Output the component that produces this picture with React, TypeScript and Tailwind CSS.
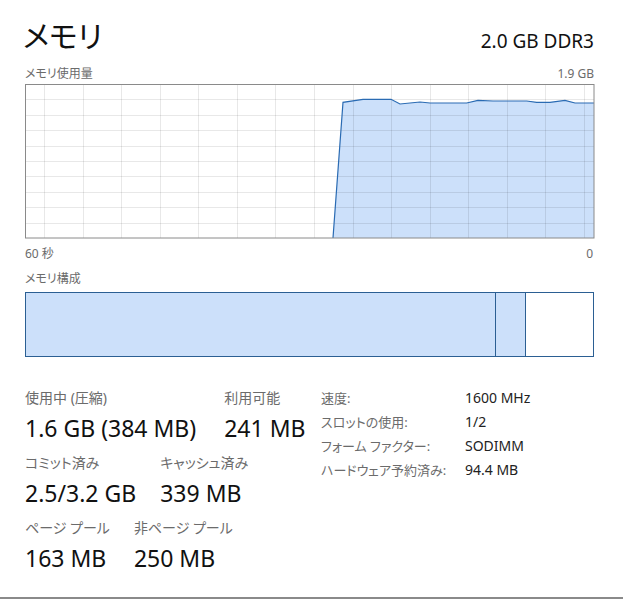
import React from 'react';

const font = {
    fontFamily: '"Segoe UI", "Noto Sans", "Noto Sans CJK JP", sans-serif',
    fontFeatureSettings: '"palt"',
};

// usage history, in chart coordinates (569 x 154)
const usagePoints: [number, number][] = [
    [308, 154], [318, 18.3], [338, 15.3], [366, 15.3], [375, 20], [395, 18], [405, 19],
    [441.7, 19], [453, 16.3], [468, 17], [501.7, 17], [511.7, 18.3], [525, 18.3],
    [540, 16.3], [550, 19], [569, 19], [569, 154],
];

const UsageChart: React.FC = () => {
    const w = 569;
    const h = 154;
    const vLines = Array.from({ length: 15 }, (_, i) => 19 + i * 38.57);
    const hLines = Array.from({ length: 9 }, (_, i) => (i + 1) * 15.4);
    const pts = usagePoints.map(p => p.join(',')).join(' ');
    const line = usagePoints.slice(0, -1).map(p => p.join(',')).join(' ');

    return (
        <svg width={w + 1} height={h + 1} className="block">
            <polygon points={pts} fill="#cce0fa" />
            {vLines.map(x => (
                <line key={x} x1={Math.round(x) + 0.5} y1={0} x2={Math.round(x) + 0.5} y2={h} stroke="#000" strokeOpacity={0.09} />
            ))}
            {hLines.map(y => (
                <line key={y} x1={0} y1={Math.round(y) + 0.5} x2={w} y2={Math.round(y) + 0.5} stroke="#000" strokeOpacity={0.09} />
            ))}
            <polyline points={line} fill="none" stroke="#2a6bb3" strokeWidth={1.2} />
            <rect x={0.5} y={0.5} width={w - 0.5} height={h - 0.5} fill="none" stroke="#8a8a8a" />
        </svg>
    );
};

const Stat: React.FC<{ label: string; value: string }> = ({ label, value }) => (
    <div className="flex flex-col">
        <span className="text-[14px] leading-[18px] text-[#6b6b6b]">{label}</span>
        <span className="text-[23px] leading-[30px] text-[#111] mt-[6px]">{value}</span>
    </div>
);

const details: [string, string][] = [
    ['速度:', '1600 MHz'],
    ['スロットの使用:', '1/2'],
    ['フォーム ファクター:', 'SODIMM'],
    ['ハードウェア予約済み:', '94.4 MB'],
];

export default function App() {
    return (
        <div style={font} className="w-[623px] h-[599px] bg-white relative overflow-hidden">
            <div className="pl-[25px] pr-[29px] pt-[16px]">
                {/* Header */}
                <div className="flex justify-between items-end">
                    <h1 className="text-[30px] leading-[40px] text-[#111] -ml-[2px]">メモリ</h1>
                    <span className="text-[19px] leading-[26px] text-[#111] mb-[2px]">2.0 GB DDR3</span>
                </div>

                {/* Usage chart */}
                <div className="flex justify-between text-[12px] leading-[16px] text-[#6b6b6b] mt-[10px]">
                    <span>メモリ使用量</span>
                    <span>1.9 GB</span>
                </div>
                <div className="mt-[2px]">
                    <UsageChart />
                </div>
                <div className="flex justify-between text-[12px] leading-[16px] text-[#6b6b6b] mt-[7px]">
                    <span>60 秒</span>
                    <span className="pr-[1px]">0</span>
                </div>

                {/* Composition */}
                <div className="text-[12px] leading-[16px] text-[#6b6b6b] mt-[9px]">メモリ構成</div>
                <div className="mt-[5px] w-[569px] h-[65px] border border-[#2b5f93] flex">
                    <div className="w-[469px] bg-[#cce0fa]" />
                    <div className="w-[30px] bg-[#cce0fa] border-l border-[#2b5f93]" />
                    <div className="flex-1 bg-white border-l border-[#2b5f93]" />
                </div>

                {/* Stats */}
                <div className="flex items-start mt-[32px]">
                    <div className="w-[296px] flex flex-col gap-[11px]">
                        <div className="flex gap-[28px]">
                            <Stat label="使用中 (圧縮)" value="1.6 GB (384 MB)" />
                            <Stat label="利用可能" value="241 MB" />
                        </div>
                        <div className="flex gap-[24px]">
                            <Stat label="コミット済み" value="2.5/3.2 GB" />
                            <Stat label="キャッシュ済み" value="339 MB" />
                        </div>
                        <div className="flex gap-[24px]">
                            <Stat label="ページ プール" value="163 MB" />
                            <Stat label="非ページ プール" value="250 MB" />
                        </div>
                    </div>
                    <div className="grid grid-cols-[144px_auto] gap-y-[6px] leading-[18px]">
                        {details.map(([k, v]) => (
                            <React.Fragment key={k}>
                                <span className="text-[13px] text-[#6b6b6b]">{k}</span>
                                <span className="text-[14px] text-[#222]">{v}</span>
                            </React.Fragment>
                        ))}
                    </div>
                </div>
            </div>
            <div className="absolute left-0 right-0 bottom-0 h-[2px] bg-[#8a8a8a]" />
        </div>
    );
}
